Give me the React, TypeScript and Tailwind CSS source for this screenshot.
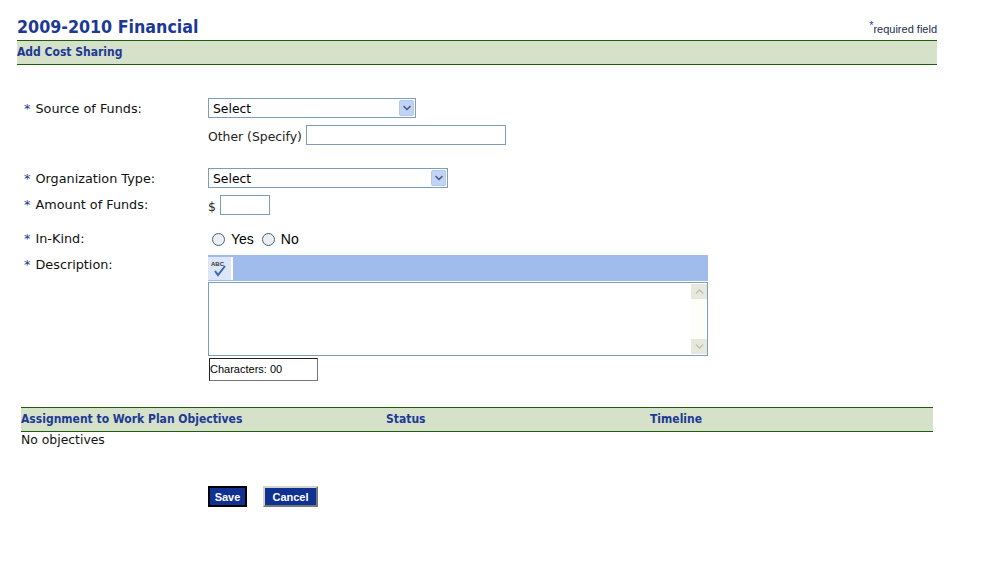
import { ChevronDown, ChevronUp } from "lucide-react";

/* fake XP style dropdown */
function SelectBox({ width }: { width: string }) {
  return (
    <div className={`${width} h-5 border border-[#7f9db9] bg-white flex items-center justify-between pl-1 pr-px text-[12.4px] text-black`}>
      <span className="pt-[2px]">Select</span>
      <span className="w-[15px] h-4 rounded-[2px] bg-[#c3d3f5] border border-[#b4c6ee] flex items-center justify-center">
        <ChevronDown size={12} strokeWidth={3.5} className="text-[#4d6185]" />
      </span>
    </div>
  );
}

function Label({ text, className }: { text: string; className?: string }) {
  return (
    <div className={`w-[191px] shrink-0 pl-[7px] text-[12.8px] text-[#111] ${className ?? ""}`}>
      <span className="text-[#1a3a8f] mr-px">*</span> {text}
    </div>
  );
}

function Radio({ label }: { label: string }) {
  return (
    <span className="flex items-center gap-[6px]">
      <span className="w-[13px] h-[13px] rounded-full border border-[#3f6284] bg-[#eceef0]" />
      <span>{label}</span>
    </span>
  );
}

export default function App() {
  return (
    <div className="w-[981px] h-[585px] bg-white overflow-hidden font-['Verdana','DejaVu_Sans',sans-serif] text-[12.4px] leading-[16px]">
      {/* header */}
      <div className="w-[920px] ml-[17px] pt-[16px]">
        <div className="flex items-start justify-between h-[24px]">
          <h1 className="font-['DejaVu_Sans_Condensed','DejaVu_Sans',sans-serif] text-[17.7px] leading-[22px] font-bold text-[#1c3a94]">2009-2010 Financial</h1>
          <div className="font-['Liberation_Sans',sans-serif] text-[11px] leading-[13px] text-[#1a2a50] mt-[7px]">
            <span className="text-[#1c3a94] relative -top-[4px]">*</span>required field
          </div>
        </div>
        <div className="h-[25px] border-y border-[#1f5c10] bg-[#d6e1ca] font-['DejaVu_Sans_Condensed','DejaVu_Sans',sans-serif] text-[12px] leading-[23px] font-bold text-[#1c3a94]">
          Add Cost Sharing
        </div>
      </div>

      {/* form */}
      <div className="ml-[17px] mt-[33px]">
        <div className="flex items-center h-5">
          <Label text="Source of Funds:" className="pt-[2px]" />
          <SelectBox width="w-[208px]" />
        </div>
        <div className="flex items-center h-5 mt-[7px] ml-[191px]">
          <span className="text-[#222] mr-[4px] pt-[4px]">Other (Specify)</span>
          <div className="w-[200px] h-5 border border-[#7f9db9] bg-white" />
        </div>
        <div className="flex items-center h-5 mt-[23px]">
          <Label text="Organization Type:" className="pt-[2px]" />
          <SelectBox width="w-[240px]" />
        </div>
        <div className="flex items-center h-5 mt-[7px]">
          <Label text="Amount of Funds:" className="-mt-[1px]" />
          <span className="text-[#222] mr-[4px] pt-[4px]">$</span>
          <div className="w-[50px] h-5 border border-[#7f9db9] bg-white" />
        </div>
        <div className="flex items-center h-5 mt-[14px]">
          <Label text="In-Kind:" className="-mt-[1px]" />
          <div className="flex items-center gap-[8px] ml-[4px] font-['Liberation_Sans',sans-serif] text-[14px]">
            <Radio label="Yes" />
            <Radio label="No" />
          </div>
        </div>
        <div className="flex items-start mt-[6px]">
          <Label text="Description:" className="mt-[2px]" />
          <div>
            <div className="w-[500px] h-[26px] bg-[#a0bcec] flex items-start pt-[2px]">
              <span className="w-[25px] h-[23px] bg-[#dce6f8] border-r-2 border-white flex items-center justify-center">
                <svg width="20" height="20" viewBox="0 0 20 20" fill="none">
                  <text x="1" y="7" fontSize="6" fontWeight="700" fontFamily="Liberation Sans" fill="#333">ABC</text>
                  <path d="M5 12l3 4 7-9" stroke="#3d66b5" strokeWidth="2" />
                </svg>
              </span>
            </div>
            <div className="w-[500px] h-[74px] mt-px border border-[#7f9db9] bg-white flex justify-end">
              <div className="w-[16px] bg-[#fdfdf9] flex flex-col justify-between py-px">
                <span className="h-[15px] bg-[#e6e8dc] flex items-center justify-center">
                  <ChevronUp size={13} strokeWidth={2.5} className="text-[#b8bcae]" />
                </span>
                <span className="h-[15px] bg-[#e6e8dc] flex items-center justify-center">
                  <ChevronDown size={13} strokeWidth={2.5} className="text-[#b8bcae]" />
                </span>
              </div>
            </div>
            <div className="w-[109px] h-[23px] mt-[2px] ml-px border border-[#222] border-r-[#777] border-b-[#777] bg-white font-['Liberation_Sans',sans-serif] text-[11px] leading-[21px] text-black">
              Characters: 00
            </div>
          </div>
        </div>
      </div>

      {/* objectives */}
      <div className="ml-[21px] mt-[26px] w-[912px]">
        <div className="h-[25px] pb-px border-y border-[#1f5c10] bg-[#d6e1ca] flex items-center font-['DejaVu_Sans_Condensed','DejaVu_Sans',sans-serif] text-[12px] font-bold text-[#1c3a94]">
          <span className="w-[365px]">Assignment to Work Plan Objectives</span>
          <span className="w-[264px]">Status</span>
          <span>Timeline</span>
        </div>
        <div className="text-[#111]">No objectives</div>
      </div>

      {/* buttons */}
      <div className="ml-[208px] mt-[38px] flex items-center gap-[16px] font-['Liberation_Sans',sans-serif] text-[11px] font-bold text-white">
        <button className="w-[39px] h-[21px] bg-[#0f3192] border-2 border-black">Save</button>
        <button className="w-[55px] h-[21px] bg-[#0f3192] border-2 border-[#d8d4c8] border-r-[#777] border-b-[#777]">Cancel</button>
      </div>
    </div>
  );
}
